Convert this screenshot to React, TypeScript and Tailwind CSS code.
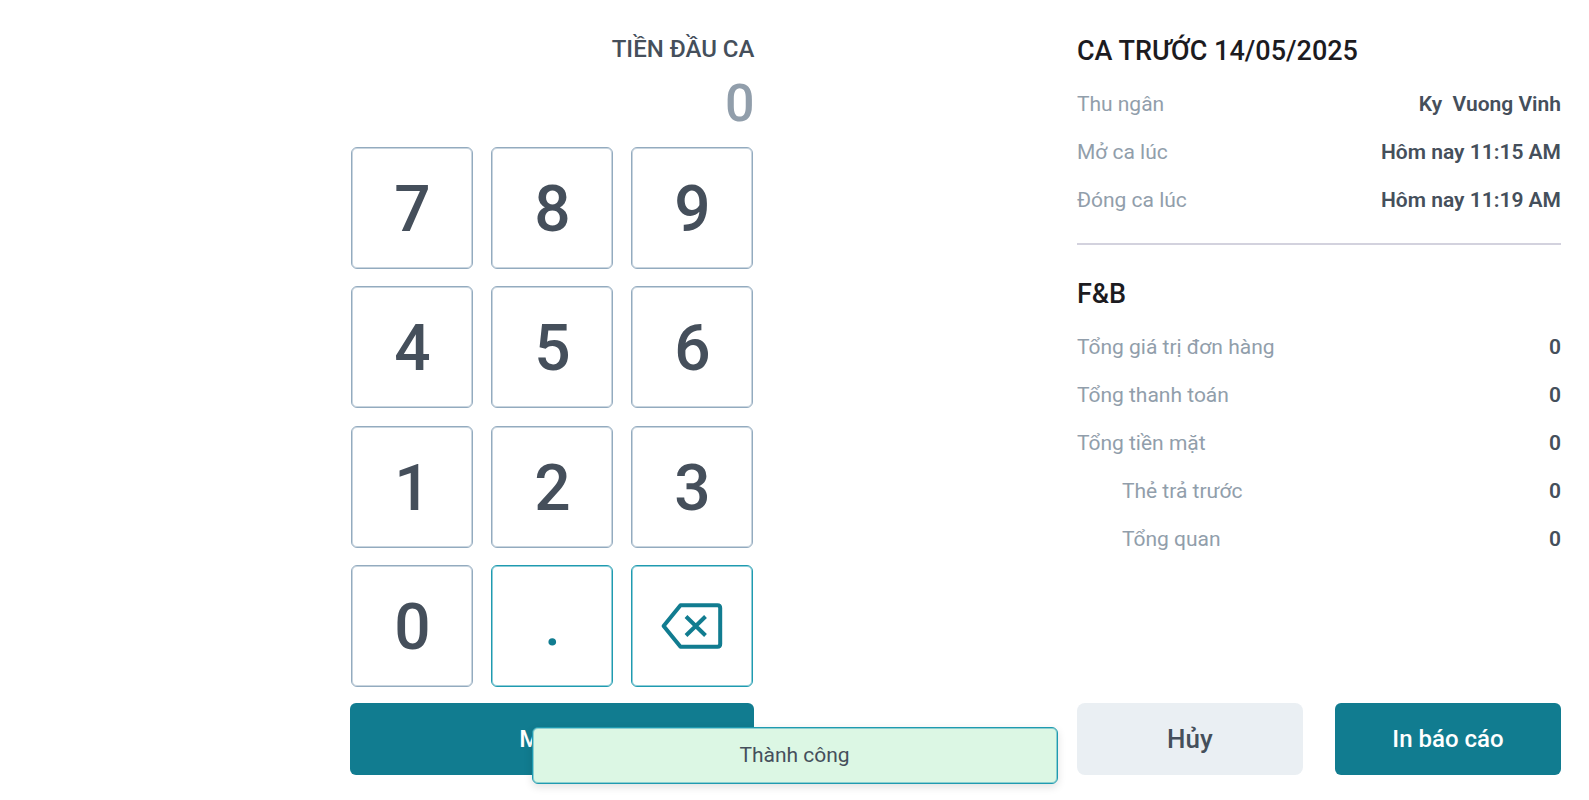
import { useState } from "react";
import clsx from "clsx";

type ReportRow = {
  label: string;
  value: string;
  nested?: boolean;
};

const shiftRows: ReportRow[] = [
  { label: "Thu ngân", value: "Ky  Vuong Vinh" },
  { label: "Mở ca lúc", value: "Hôm nay 11:15 AM" },
  { label: "Đóng ca lúc", value: "Hôm nay 11:19 AM" },
];

const fnbRows: ReportRow[] = [
  { label: "Tổng giá trị đơn hàng", value: "0" },
  { label: "Tổng thanh toán", value: "0" },
  { label: "Tổng tiền mặt", value: "0" },
  { label: "Thẻ trả trước", value: "0", nested: true },
  { label: "Tổng quan", value: "0", nested: true },
];

const digits = ["7", "8", "9", "4", "5", "6", "1", "2", "3", "0"];

function BackspaceIcon() {
  return (
    <svg
      width="62"
      height="46"
      viewBox="0 0 62 46"
      fill="none"
      stroke="currentColor"
      strokeWidth="4"
      aria-hidden="true"
    >
      <path
        d="M19.5 2.3H56.5Q59.2 2.3 59.2 5V41Q59.2 43.7 56.5 43.7H19.5L2.6 23Z"
        strokeLinejoin="round"
      />
      <path d="M25 13.5L44.5 32.5M44.5 13.5L25 32.5" />
    </svg>
  );
}

function KeyButton({
  accent,
  label,
  onClick,
  children,
}: {
  accent?: boolean;
  label: string;
  onClick: () => void;
  children: React.ReactNode;
}) {
  return (
    <button
      type="button"
      aria-label={label}
      onClick={onClick}
      className={clsx(
        "flex aspect-square items-center justify-center rounded-md border leading-none font-medium",
        accent
          ? "border-[#1f9bb0] text-[56px] text-[#117c90] shadow-[inset_0_0_0_1px_#8fcdd8]"
          : "border-[#93abbf] pt-1 text-[64px] text-[#454f5b] shadow-[inset_0_0_0_1px_#c9d5df]"
      )}
    >
      {children}
    </button>
  );
}

function ReportSection({ title, rows }: { title: string; rows: ReportRow[] }) {
  return (
    <section>
      <h2 className="mb-2 text-[27px] leading-11 font-medium text-[#1c1b1f]">
        {title}
      </h2>
      <dl>
        {rows.map((row) => (
          <div
            key={row.label}
            className={clsx(
              "flex h-12 items-center justify-between text-[21px]",
              row.nested && "pl-[45px]"
            )}
          >
            <dt className="text-[#919eab]">{row.label}</dt>
            <dd className="font-semibold whitespace-pre text-[#454f5b]">
              {row.value}
            </dd>
          </div>
        ))}
      </dl>
    </section>
  );
}

export default function App() {
  const [amount, setAmount] = useState("");

  const handleKey = (key: string) => {
    setAmount((prev) => (key === "." && prev.includes(".") ? prev : prev + key));
  };

  return (
    <div className="relative grid min-h-screen grid-cols-[13fr_6fr] bg-white px-7 pt-[29px] pb-[25px] font-[Roboto,sans-serif]">
      <main className="flex w-[404px] flex-col justify-self-center">
        <label
          htmlFor="openingCash"
          className="text-right text-2xl leading-10 font-medium text-[#454f5b]"
        >
          TIỀN ĐẦU CA
        </label>
        <input
          id="openingCash"
          type="text"
          inputMode="decimal"
          placeholder="0"
          value={amount}
          onChange={(e) => setAmount(e.target.value)}
          className="mb-2 h-[70px] w-full text-right text-[52px] font-medium text-[#454f5b] outline-none placeholder:text-[#919eab]"
        />
        <div className="mb-4 grid flex-1 grid-cols-3 content-between gap-x-[18px] px-px">
          {digits.map((digit) => (
            <KeyButton
              key={digit}
              label={digit}
              onClick={() => handleKey(digit)}
            >
              {digit}
            </KeyButton>
          ))}
          <KeyButton accent label="." onClick={() => handleKey(".")}>
            .
          </KeyButton>
          <KeyButton
            accent
            label="Xóa"
            onClick={() => setAmount((prev) => prev.slice(0, -1))}
          >
            <BackspaceIcon />
          </KeyButton>
        </div>
        <button
          type="button"
          className="h-18 rounded-md bg-[#117c90] text-2xl font-medium text-white"
        >
          Mở ca
        </button>
      </main>

      <aside className="flex flex-col">
        <ReportSection title="CA TRƯỚC 14/05/2025" rows={shiftRows} />
        <hr className="mt-[18px] mb-[27px] border-t-2 border-[#d3d2de]" />
        <ReportSection title="F&B" rows={fnbRows} />
        <div className="mt-auto grid grid-cols-2 gap-8">
          <button
            type="button"
            className="h-18 rounded-lg bg-[#eaeff3] text-[26px] font-medium text-[#454f5b]"
          >
            Hủy
          </button>
          <button
            type="button"
            className="h-18 rounded-md bg-[#117c90] text-2xl font-medium text-white"
          >
            In báo cáo
          </button>
        </div>
      </aside>

      <div
        role="status"
        className="absolute inset-x-0 bottom-4 mx-auto flex h-[57px] w-[526px] items-center justify-center rounded-md border border-[#1f9bb0] bg-[#dcf7e4] text-[21px] text-[#454f5b] shadow-[inset_0_0_0_1px_#8dcfd0,0_3px_8px_rgba(0,0,0,0.12)]"
      >
        Thành công
      </div>
    </div>
  );
}
